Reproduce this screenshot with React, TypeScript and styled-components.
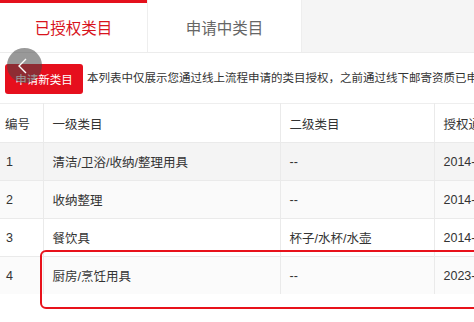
import React from "react";
import styled, { createGlobalStyle } from "styled-components";

const GlobalStyle = createGlobalStyle`
  html, body {
    margin: 0;
    padding: 0;
    background: #fff;
    overflow: hidden;
  }
  body {
    font-family: "Liberation Sans", "Noto Sans CJK SC", sans-serif;
    color: #333;
  }
`;

interface Row {
  id: number;
  first: string;
  second: string;
  date: string;
  bg: string;
}

const rows: Row[] = [
  { id: 1, first: "清洁/卫浴/收纳/整理用具", second: "--", date: "2014-07-21", bg: "#f4f4f4" },
  { id: 2, first: "收纳整理", second: "--", date: "2014-07-21", bg: "#fafafa" },
  { id: 3, first: "餐饮具", second: "杯子/水杯/水壶", date: "2014-07-21", bg: "#ffffff" },
  { id: 4, first: "厨房/烹饪用具", second: "--", date: "2023-05-16", bg: "#fbfbfb" },
];

const App: React.FC = () => {
  return (
    <Page>
      <GlobalStyle />
      <TabBar>
        <Tab $active $width={148}>已授权类目</Tab>
        <Tab $width={154}>申请中类目</Tab>
      </TabBar>

      <Toolbar>
        <NewButton>申请新类目</NewButton>
        <Notice>本列表中仅展示您通过线上流程申请的类目授权，之前通过线下邮寄资质已申请的类目不在此展示</Notice>
        <BackCircle aria-label="返回">
          <svg width="14" height="18" viewBox="0 0 14 18" fill="none">
            <path d="M10 2 L3 9 L10 16" stroke="#fff" strokeWidth="1.4" />
          </svg>
        </BackCircle>
      </Toolbar>

      <TableWrap>
        <Table>
          <colgroup>
            <col style={{ width: 43 }} />
            <col style={{ width: 237 }} />
            <col style={{ width: 154 }} />
            <col style={{ width: 150 }} />
          </colgroup>
          <thead>
            <tr>
              <Th $pad={5}>编号</Th>
              <Th>一级类目</Th>
              <Th>二级类目</Th>
              <Th>授权通过时间</Th>
            </tr>
          </thead>
          <tbody>
            {rows.map((r) => (
              <BodyRow key={r.id} $bg={r.bg}>
                <Td $pad={6}>{r.id}</Td>
                <Td>{r.first}</Td>
                <Td>{r.second}</Td>
                <Td>{r.date}</Td>
              </BodyRow>
            ))}
          </tbody>
        </Table>
        <Highlight />
      </TableWrap>
    </Page>
  );
};

const Page = styled.div`
  position: relative;
  width: 474px;
  height: 322px;
  overflow: hidden;
  background: #fff;
`;

const TabBar = styled.div`
  display: flex;
  height: 52px;
  background: #f5f5f5;
  border-bottom: 1px solid #ececec;
`;

const Tab = styled.div<{ $active?: boolean; $width: number }>`
  width: ${(p) => p.$width}px;
  display: flex;
  align-items: center;
  justify-content: center;
  background: #fff;
  border-right: 1px solid #eeeeee;
  box-shadow: ${(p) => (p.$active ? "inset 0 3px 0 #e4101c" : "none")};
  font-size: 15.5px;
  color: ${(p) => (p.$active ? "#d8141d" : "#666")};
  padding-top: 2px;
  box-sizing: border-box;
`;

const Toolbar = styled.div`
  position: relative;
  display: flex;
  align-items: center;
  gap: 4px;
  height: 50px;
  padding: 0 5px;
  white-space: nowrap;
`;

const NewButton = styled.div`
  flex: none;
  width: 78px;
  height: 30px;
  display: flex;
  align-items: center;
  justify-content: center;
  background: #e60f1d;
  color: #fff;
  border-radius: 3px;
  font-size: 11.5px;
  margin-top: 2px;
`;

const Notice = styled.span`
  font-size: 11.5px;
  color: #333;
  margin-top: -2px;
`;

const BackCircle = styled.div`
  position: absolute;
  left: 7px;
  top: -5px;
  width: 35px;
  height: 35px;
  border-radius: 50%;
  background: rgba(70, 70, 70, 0.55);
  display: flex;
  align-items: center;
  justify-content: center;
  padding-right: 3px;
  box-sizing: border-box;
`;

const TableWrap = styled.div`
  position: relative;
`;

const Table = styled.table`
  border-collapse: collapse;
  table-layout: fixed;
  width: 584px;
  font-size: 12.5px;
  color: #333;
  border-top: 1px solid #eeeeee;
`;

const Th = styled.th<{ $pad?: number }>`
  height: 38px;
  padding: 0 0 0 ${(p) => p.$pad ?? 9}px;
  text-align: left;
  font-weight: normal;
  background: #fff;
  border-right: 1px solid #eaeaea;
  border-bottom: 1px solid #eaeaea;
  white-space: nowrap;
`;

const BodyRow = styled.tr<{ $bg: string }>`
  background: ${(p) => p.$bg};
`;

const Td = styled.td<{ $pad?: number }>`
  height: 37px;
  padding: 0 0 0 ${(p) => p.$pad ?? 9}px;
  border-right: 1px solid #eaeaea;
  border-bottom: 1px solid #eaeaea;
  white-space: nowrap;

  tr:last-child > & {
    border-bottom: none;
  }
`;

const Highlight = styled.div`
  position: absolute;
  left: 40px;
  top: 147px;
  width: 460px;
  height: 59px;
  border: 2.5px solid #e8121b;
  border-radius: 6px;
  box-sizing: border-box;
  pointer-events: none;
`;

export default App;
